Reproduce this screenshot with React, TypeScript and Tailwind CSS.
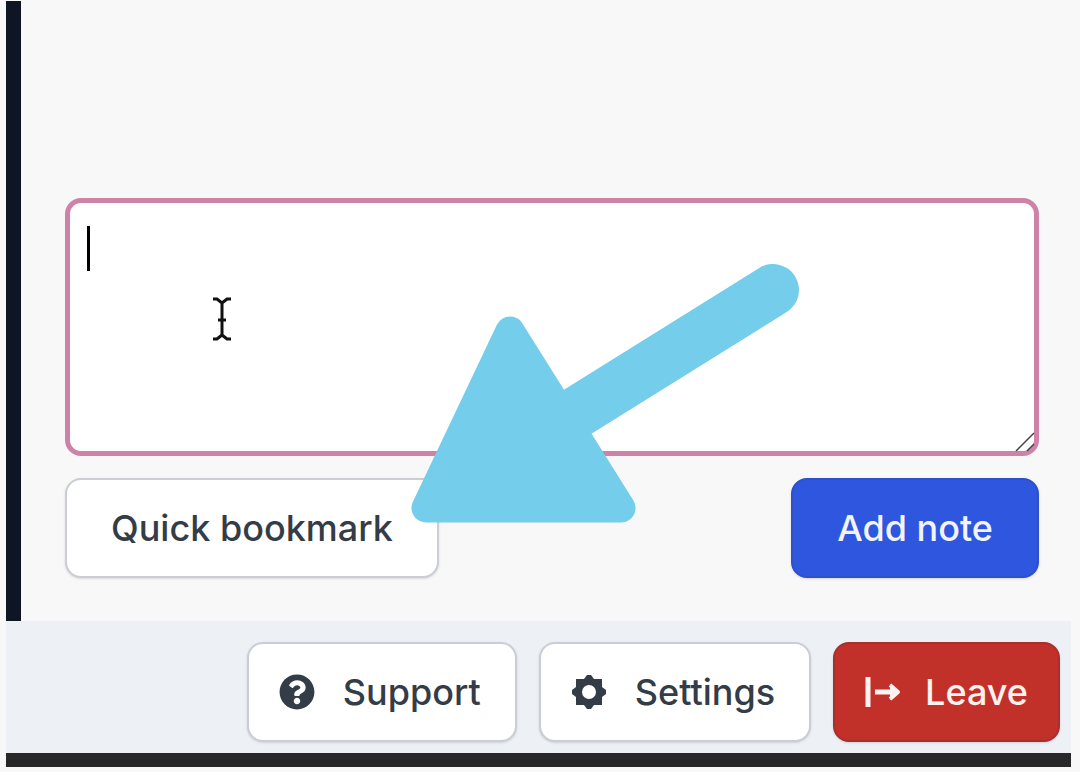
import type { ReactNode } from 'react';
import { clsx } from 'clsx';
import { FaQuestionCircle } from 'react-icons/fa';

interface ActionButtonProps {
  children: ReactNode;
  icon?: ReactNode;
  variant?: 'default' | 'primary' | 'danger';
}

function ActionButton({ children, icon, variant = 'default' }: ActionButtonProps) {
  return (
    <button
      type="button"
      className={clsx(
        'flex h-[100px] items-center rounded-2xl border-2 text-4xl font-medium whitespace-nowrap shadow-sm',
        !icon && 'px-11',
        icon && (variant === 'danger' ? 'gap-6 px-[30px]' : 'gap-7 pr-[34px] pl-[30px]'),
        variant === 'default' && 'border-[#cacdd6] bg-white text-[#343c47]',
        variant === 'primary' && 'border-[#2d50cb] bg-[#2e56de] text-[#f1f4ff]',
        variant === 'danger' && 'border-[#a92e2c] bg-[#c23129] text-[#fff1ef]',
      )}
    >
      {icon}
      {children}
    </button>
  );
}

function GearIcon() {
  return (
    <svg viewBox="0 0 36 36" className="size-9" aria-hidden="true">
      <path
        fill="currentColor"
        fillRule="evenodd"
        d="M16 1h4l3 4h8v8l4 3v4l-4 3v8h-8l-3 4h-4l-3-4H5v-8l-4-3v-4l4-3V5h8Zm2 10a7 7 0 1 0 0 14 7 7 0 0 0 0-14Z"
      />
    </svg>
  );
}

function LeaveIcon() {
  return (
    <svg viewBox="0 0 36 36" className="size-9" fill="none" stroke="currentColor" aria-hidden="true">
      <path d="M3 3v30" strokeWidth="5" />
      <path d="M10 18h21" strokeWidth="5" />
      <path d="M25 11l8 7-8 7" strokeWidth="4" strokeLinejoin="round" />
      <path d="M25 10v16l9-8Z" fill="currentColor" stroke="none" />
    </svg>
  );
}

function PointerArrow() {
  return (
    <svg
      viewBox="0 0 410 280"
      className="pointer-events-none absolute top-[52px] left-[335px] w-[410px]"
      fill="#74cdea"
      stroke="#74cdea"
      strokeLinecap="round"
      strokeLinejoin="round"
      aria-hidden="true"
    >
      <path d="M110 81L26 258h195Z" strokeWidth="29" />
      <path d="M150 179L373 40" strokeWidth="52" />
    </svg>
  );
}

function NoteField() {
  return (
    <div className="relative">
      <textarea
        aria-label="Note"
        className="block h-[258px] w-full resize-none rounded-2xl border-[5px] border-[#cf82a8] bg-white px-5 py-6 text-4xl text-[#343c47] outline-none"
      />
      {/* Text caret */}
      <span className="absolute top-7 left-[22px] h-[45px] w-[3px] bg-black" />
      {/* Mouse cursor */}
      <svg
        viewBox="0 0 20 44"
        className="absolute top-[99px] left-[147px] w-5"
        fill="none"
        stroke="#111"
        strokeWidth="3"
        aria-hidden="true"
      >
        <path d="M1 2h4l5 4 5-4h4M1 42h4l5-4 5 4h4M10 5v34M6 23h8" />
      </svg>
      {/* Resize grip */}
      <svg
        viewBox="0 0 20 20"
        className="absolute right-1 bottom-1 w-5"
        stroke="#444"
        strokeWidth="1.5"
        aria-hidden="true"
      >
        <path d="M1 19L19 1M12 19l7-7" />
      </svg>
    </div>
  );
}

export default function App() {
  return (
    <div className="flex min-h-screen flex-col bg-[#f8f8f8] pt-px pr-[9px] pb-[5px] pl-[6px] font-['Inter',sans-serif]">
      <main className="flex flex-1 flex-col justify-end border-l-[15px] border-[#0e1525] pr-8 pb-[43px] pl-11">
        <div className="relative flex flex-col gap-[22px]">
          <NoteField />
          <div className="flex justify-between">
            <ActionButton>Quick bookmark</ActionButton>
            <ActionButton variant="primary">Add note</ActionButton>
          </div>
          <PointerArrow />
        </div>
      </main>

      <footer className="flex justify-end gap-[22px] border-b-[14px] border-[#282828] bg-[#edf0f4] pt-[21px] pr-[11px] pb-[11px]">
        <ActionButton icon={<FaQuestionCircle className="size-9" aria-hidden="true" />}>
          Support
        </ActionButton>
        <ActionButton icon={<GearIcon />}>Settings</ActionButton>
        <ActionButton variant="danger" icon={<LeaveIcon />}>
          Leave
        </ActionButton>
      </footer>
    </div>
  );
}
